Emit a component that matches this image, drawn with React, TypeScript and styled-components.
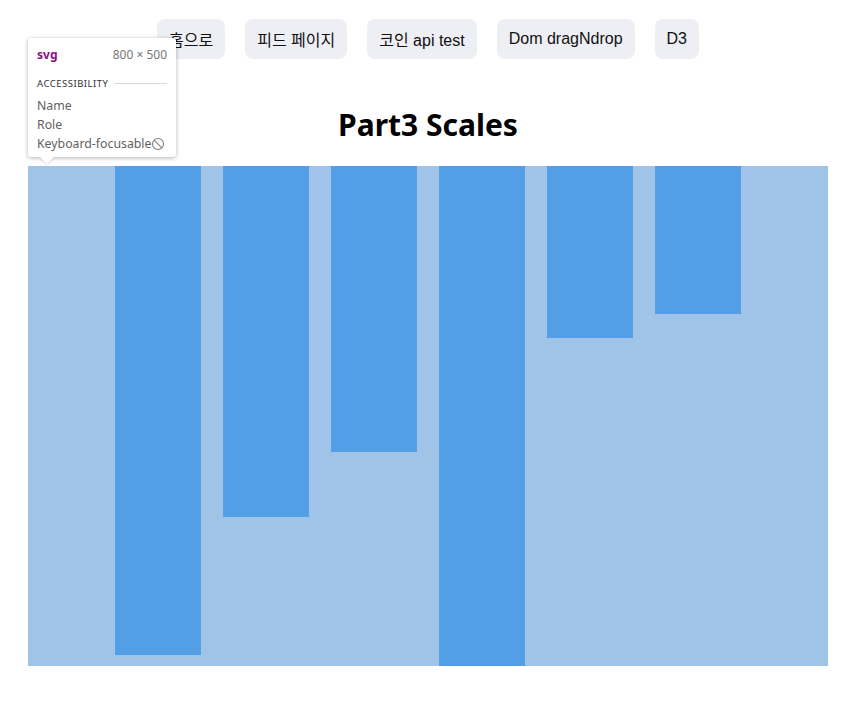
import React from 'react';
import styled, { createGlobalStyle } from 'styled-components';

const GlobalStyle = createGlobalStyle`
  html, body {
    margin: 0;
    padding: 0;
    background: #ffffff;
    font-family: "Noto Sans", "Noto Sans CJK KR", sans-serif;
    color: #111;
  }
`

const Page = styled.div`
  position: relative;
  width: 858px;
  padding-top: 19px;
`

const Nav = styled.nav`
  display: flex;
  justify-content: center;
  gap: 20px;
  margin-right: 2px;
`

const NavButton = styled.button`
  height: 40px;
  padding: 0 12px;
  border: none;
  border-radius: 8px;
  background: #eeeff4;
  font-family: "Liberation Sans", "Noto Sans CJK KR", sans-serif;
  font-size: 16px;
  color: #111;
  cursor: pointer;
`

const Title = styled.h1`
  margin: 47px 0 22px;
  text-align: center;
  font-size: 30px;
  line-height: 38px;
  font-weight: 700;
  color: #000;
  margin-right: 2px;
`

const Chart = styled.svg`
  display: block;
  margin-left: 28px;
  background: #a0c4e8;
`

const Tooltip = styled.div`
  position: absolute;
  left: 28px;
  top: 38px;
  width: 148px;
  box-sizing: border-box;
  padding: 7px 9px 4px;
  background: #fff;
  border-radius: 3px;
  box-shadow: 0 1px 4px rgba(0, 0, 0, 0.3);
  font-size: 12px;
  line-height: 19px;
  color: #5f5f5f;

  &::after {
    content: '';
    position: absolute;
    left: 12px;
    bottom: -7px;
    border-left: 7px solid transparent;
    border-right: 7px solid transparent;
    border-top: 7px solid #fff;
    filter: drop-shadow(0 1px 1px rgba(0, 0, 0, 0.15));
  }
`

const TipHead = styled.div`
  display: flex;
  justify-content: space-between;
`

const TagName = styled.span`
  color: #881280;
  font-weight: 700;
`

const Size = styled.span`
  color: #777;
`

const Section = styled.div`
  display: flex;
  align-items: center;
  gap: 6px;
  margin-top: 10px;
  margin-bottom: 3px;
  font-size: 9.5px;
  letter-spacing: 0.5px;
  color: #333;

  &::after {
    content: '';
    flex: 1;
    height: 1px;
    background: #d8d8d8;
  }
`

const Row = styled.div`
  display: flex;
  align-items: center;
  white-space: nowrap;
  font-size: 12.3px;
`

const data = [489, 351, 286, 500, 172, 148];

export default function App() {
  return (
    <Page>
      <GlobalStyle />
      <Nav>
        <NavButton>홈으로</NavButton>
        <NavButton>피드 페이지</NavButton>
        <NavButton>코인 api test</NavButton>
        <NavButton>Dom dragNdrop</NavButton>
        <NavButton>D3</NavButton>
      </Nav>
      <Title>Part3 Scales</Title>
      <Chart width={800} height={500}>
        {data.map((h, i) => (
          <rect key={i} x={87 + i * 108} y={0} width={86} height={h} fill="#529fe8" />
        ))}
      </Chart>
      <Tooltip>
        <TipHead>
          <TagName>svg</TagName>
          <Size>800 × 500</Size>
        </TipHead>
        <Section>ACCESSIBILITY</Section>
        <Row>Name</Row>
        <Row>Role</Row>
        <Row>
          Keyboard-focusable
          <svg width="14" height="14" viewBox="0 0 14 14">
            <circle cx="7" cy="7" r="5.5" fill="none" stroke="#888" strokeWidth="1.2" />
            <line x1="3.2" y1="3.2" x2="10.8" y2="10.8" stroke="#888" strokeWidth="1.2" />
          </svg>
        </Row>
      </Tooltip>
    </Page>
  );
}
